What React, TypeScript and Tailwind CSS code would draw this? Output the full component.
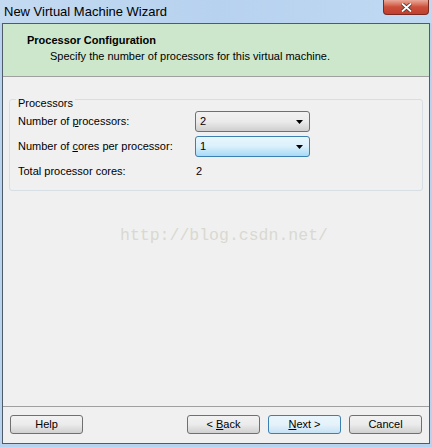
import { ReactNode } from 'react'

const font = { fontFamily: '"Liberation Sans", Arial, sans-serif' }

function Combo({ value, active }: { value: string; active?: boolean }) {
  return (
    <div
      className={`w-[115px] h-[21px] rounded-[3px] border flex items-center justify-between pl-[4px] pr-[6px] text-[11px] text-black ${
        active
          ? 'border-[#3c7fb1] bg-gradient-to-b from-[#eaf6fd] via-[#d9f0fc] to-[#a7d9f5]'
          : 'border-[#707070] bg-gradient-to-b from-[#f2f2f2] via-[#ebebeb] to-[#cfcfcf]'
      }`}
    >
      <span>{value}</span>
      <svg width="7" height="4" viewBox="0 0 7 4">
        <path d="M0 0h7L3.5 4z" fill="#000" />
      </svg>
    </div>
  )
}

function Button({ children, focused }: { children: ReactNode; focused?: boolean }) {
  return (
    <div
      className={`w-[73px] h-[19px] rounded-[3px] border flex items-center justify-center text-[11px] text-black ${
        focused
          ? 'border-[#3c7fb1] bg-gradient-to-b from-[#eaf6fd] via-[#e6f2fa] to-[#c6e2f5]'
          : 'border-[#707070] bg-gradient-to-b from-[#f2f2f2] via-[#ebebeb] to-[#d0d0d0]'
      }`}
    >
      {children}
    </div>
  )
}

export default function App() {
  return (
    <div className="w-[432px] h-[447px] flex flex-col bg-[#b9d3ee] overflow-hidden" style={font}>
      {/* title bar */}
      <div className="h-[23px] flex items-start justify-between bg-gradient-to-r from-[#c3daf1] via-[#b7d2ef] to-[#c0d9f3]">
        <span className="pl-[4px] pt-[2px] text-[13px] text-black">New Virtual Machine Wizard</span>
        <div className="mr-[3px] w-[46px] h-[15px] rounded-b-[4px] border border-t-0 border-[#7a2a20] bg-gradient-to-b from-[#e9a99a] via-[#cc4f3a] to-[#c0402c] flex items-center justify-center">
          <svg width="11" height="9" viewBox="0 0 11 9">
            <path d="M1 0.5L10 8.5M10 0.5L1 8.5" stroke="#3d3d3d" strokeWidth="3.4" />
            <path d="M1 0.5L10 8.5M10 0.5L1 8.5" stroke="#fff" strokeWidth="1.8" />
          </svg>
        </div>
      </div>

      <div className="flex-1 flex px-[2px]">
        <div className="flex-1 flex flex-col border border-[#4f5b69] bg-[#f0f0f0]">
          {/* header */}
          <div className="h-[53px] bg-[#cce7cc] border-b border-[#a0a0a0] pt-[9px] pl-[24px]">
            <div className="text-[11px] font-bold text-black leading-[14px]">Processor Configuration</div>
            <div className="text-[11px] text-black leading-[14px] mt-[2px] pl-[23px]">
              Specify the number of processors for this virtual machine.
            </div>
          </div>

          {/* content */}
          <div className="relative flex-1 px-[6px] pt-[22px]">
            <div className="h-[92px] border border-[#d5dfe5] rounded-[3px] relative px-[8px]">
              <span className="absolute -top-[4px] left-[6px] bg-[#f0f0f0] px-[2px] text-[11px] text-black leading-[14px]">
                Processors
              </span>
              <div className="pt-[11px] flex flex-col gap-[4px] text-[11px] text-black">
                <div className="flex items-center">
                  <span className="w-[177px]">
                    Number of <span className="underline">p</span>rocessors:
                  </span>
                  <Combo value="2" />
                </div>
                <div className="flex items-center">
                  <span className="w-[177px]">
                    Number of <span className="underline">c</span>ores per processor:
                  </span>
                  <Combo value="1" active />
                </div>
                <div className="flex items-center h-[21px]">
                  <span className="w-[177px]">Total processor cores:</span>
                  <span className="pl-[1px]">2</span>
                </div>
              </div>
            </div>

            <div
              className="absolute left-[117px] top-[147px] text-[16.5px] text-[#d9d9d1]"
              style={{ fontFamily: '"Liberation Mono", "Courier New", monospace' }}
            >
              http://blog.csdn.net/
            </div>
          </div>

          {/* footer */}
          <div className="h-[37px] border-t border-[#a0a0a0] flex items-start pt-[8px] px-[7px]">
            <Button>Help</Button>
            <div className="flex-1" />
            <div className="flex gap-[8px]">
              <Button>
                &lt; <span className="underline ml-[3px]">B</span>ack
              </Button>
              <Button focused>
                <span className="underline">N</span>ext &gt;
              </Button>
              <Button>Cancel</Button>
            </div>
          </div>
        </div>
      </div>
      <div className="h-[3px]" />
    </div>
  )
}
